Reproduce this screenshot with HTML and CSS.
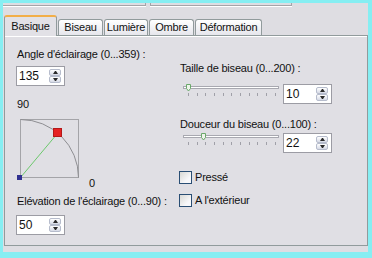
FILE: index.html
```html
<!DOCTYPE html>
<html lang="fr">
<head>
    <meta charset="UTF-8">
    <title>Biseau intérieur</title>
    <link rel="stylesheet" href="styles.css">
</head>
<body>
<div class="window">
    <div class="groups">
        <div class="grp grp-a"></div>
        <div class="grp grp-b"></div>
    </div>

    <div class="tabs">
        <div class="tab active tab-basique">Basique</div>
        <div class="tab tab-biseau">Biseau</div>
        <div class="tab tab-lumiere">Lumière</div>
        <div class="tab tab-ombre">Ombre</div>
        <div class="tab tab-deform">Déformation</div>
    </div>

    <div class="panel">
        <div class="col-left">
            <div class="label">Angle d'éclairage (0...359) :</div>
            <div class="spin spin-angle">
                <span class="val">135</span>
                <span class="btns"><span class="btn up"></span><span class="btn down"></span></span>
            </div>

            <div class="label deg90">90</div>
            <div class="diagram">
                <svg class="light" width="66" height="66" viewBox="0 0 66 66">
                    <rect x="4.5" y="3.5" width="58" height="58" fill="none" stroke="#a4a4a8"/>
                    <path d="M4.5 3.5 A58 58 0 0 1 62.5 61.5" fill="none" stroke="#8e8e92"/>
                    <line x1="4.5" y1="61.5" x2="41.8" y2="17.1" stroke="#6cc86c"/>
                    <rect x="37.5" y="12.5" width="8" height="8" fill="#e62222" stroke="#b41818"/>
                    <rect x="1" y="59" width="5" height="5" fill="#303090"/>
                </svg>
                <span class="label zero">0</span>
            </div>

            <div class="label elev">Elévation de l'éclairage (0...90) :</div>
            <div class="spin spin-elev">
                <span class="val">50</span>
                <span class="btns"><span class="btn up"></span><span class="btn down"></span></span>
            </div>
        </div>

        <div class="col-right">
            <div class="label">Taille de biseau (0...200) :</div>
            <div class="slider-row row-size">
                <svg class="slider" width="100" height="20" viewBox="0 0 100 20">
                    <rect x="3.5" y="2.5" width="95" height="2" fill="#fff" stroke="#a8a8b0"/>
                    <g stroke="#a0a0a8">
                        <line x1="8.5" y1="9" x2="8.5" y2="12"/>
                        <line x1="17.5" y1="9" x2="17.5" y2="12"/>
                        <line x1="25.5" y1="9" x2="25.5" y2="12"/>
                        <line x1="34.5" y1="9" x2="34.5" y2="12"/>
                        <line x1="43.5" y1="9" x2="43.5" y2="12"/>
                        <line x1="51.5" y1="9" x2="51.5" y2="12"/>
                        <line x1="60.5" y1="9" x2="60.5" y2="12"/>
                        <line x1="69.5" y1="9" x2="69.5" y2="12"/>
                        <line x1="77.5" y1="9" x2="77.5" y2="12"/>
                        <line x1="86.5" y1="9" x2="86.5" y2="12"/>
                        <line x1="95.5" y1="9" x2="95.5" y2="12"/>
                    </g>
                    <path d="M6.5 0.5 h4 v4 l-2 2.5 l-2 -2.5 z" fill="#eef4ea" stroke="#6aa86a"/>
                </svg>
                <div class="spin">
                    <span class="val">10</span>
                    <span class="btns"><span class="btn up"></span><span class="btn down"></span></span>
                </div>
            </div>

            <div class="label soft">Douceur du biseau (0...100) :</div>
            <div class="slider-row row-soft">
                <svg class="slider" width="100" height="20" viewBox="0 0 100 20">
                    <rect x="3.5" y="2.5" width="95" height="2" fill="#fff" stroke="#a8a8b0"/>
                    <g stroke="#a0a0a8">
                        <line x1="8.5" y1="9" x2="8.5" y2="12"/>
                        <line x1="17.5" y1="9" x2="17.5" y2="12"/>
                        <line x1="25.5" y1="9" x2="25.5" y2="12"/>
                        <line x1="34.5" y1="9" x2="34.5" y2="12"/>
                        <line x1="43.5" y1="9" x2="43.5" y2="12"/>
                        <line x1="51.5" y1="9" x2="51.5" y2="12"/>
                        <line x1="60.5" y1="9" x2="60.5" y2="12"/>
                        <line x1="69.5" y1="9" x2="69.5" y2="12"/>
                        <line x1="77.5" y1="9" x2="77.5" y2="12"/>
                        <line x1="86.5" y1="9" x2="86.5" y2="12"/>
                        <line x1="95.5" y1="9" x2="95.5" y2="12"/>
                    </g>
                    <path d="M21.5 0.5 h4 v4 l-2 2.5 l-2 -2.5 z" fill="#eef4ea" stroke="#6aa86a"/>
                </svg>
                <div class="spin">
                    <span class="val">22</span>
                    <span class="btns"><span class="btn up"></span><span class="btn down"></span></span>
                </div>
            </div>

            <div class="check check-pressed"><span class="box"></span><span class="label">Pressé</span></div>
            <div class="check check-outside"><span class="box"></span><span class="label">A l'extérieur</span></div>
        </div>
    </div>
</div>
</body>
</html>
```

FILE: styles.css
```css
body {
    margin: 0;
    height: 258px;
    overflow: hidden;
    background: #86eef2;
    font-family: "Liberation Sans", Arial, sans-serif;
    font-size: 11px;
    color: #111;
}
.window {
    width: 365px;
    height: 249px;
    margin: 3px 0 0 3px;
    background: #dedde2;
    display: flex;
    flex-direction: column;
}
.groups {
    display: flex;
    height: 3px;
}
.grp {
    height: 3px;
    box-sizing: border-box;
    border: 1px solid #a4a4a8;
    border-top: none;
    box-shadow: 0 1px 0 #fff;
}
.grp-a {
    width: 143px;
    border-left: none;
}
.grp-b {
    width: 142px;
    margin-left: 4px;
}
.tabs {
    display: flex;
    align-items: flex-end;
    height: 20px;
    margin-top: 9px;
    padding-left: 1px;
}
.tab {
    box-sizing: border-box;
    height: 16px;
    padding-top: 1px;
    line-height: 13px;
    letter-spacing: -0.2px;
    text-align: center;
    white-space: nowrap;
    border: 1px solid #919b9c;
    border-bottom: none;
    border-radius: 3px 3px 0 0;
    background: linear-gradient(#ffffff, #e6e6ec);
}
.tab.active {
    position: relative;
    z-index: 1;
    height: 21px;
    margin-bottom: -1px;
    padding-top: 3px;
    border-top: 2px solid #f2ae48;
    background: #e2e1e6;
}
.tab-basique { width: 53px; }
.tab-biseau { width: 45px; margin-left: 1px; }
.tab-lumiere { width: 44px; margin-left: 1px; }
.tab-ombre { width: 45px; margin-left: 1px; }
.tab-deform { width: 67px; margin-left: 1px; }
.panel {
    box-sizing: border-box;
    height: 211px;
    margin-left: 1px;
    padding-left: 11px;
    display: flex;
    background: #e0dfe4;
    border: 1px solid #919b9c;
    box-shadow: inset 0 1px 0 #fff;
}
.label {
    line-height: 13px;
    letter-spacing: -0.2px;
    white-space: nowrap;
}
.col-left {
    width: 163px;
    padding-top: 12px;
    display: flex;
    flex-direction: column;
    align-items: flex-start;
}
.col-left > .label {
    padding-left: 1px;
}
.spin {
    box-sizing: border-box;
    width: 49px;
    height: 20px;
    padding: 0 3px 0 2px;
    display: flex;
    align-items: center;
    background: #fff;
    border: 1px solid #9c9ca4;
}
.spin .val {
    flex: 1;
    font-size: 12px;
    line-height: 13px;
}
.btns {
    display: flex;
    flex-direction: column;
    width: 12px;
}
.btn {
    box-sizing: border-box;
    height: 7px;
    display: flex;
    align-items: center;
    justify-content: center;
    border: 1px solid #b6bccc;
    border-radius: 2px;
    background: linear-gradient(#ffffff, #d6dae6);
}
.btn::after {
    content: "";
    width: 1px;
    height: 0;
    border-left: 2px solid transparent;
    border-right: 2px solid transparent;
}
.btn.up::after {
    border-bottom: 3px solid #2a2a2a;
}
.btn.down::after {
    border-top: 3px solid #2a2a2a;
}
.spin-angle {
    margin-top: 5px;
}
.deg90 {
    margin-top: 12px;
}
.diagram {
    height: 74px;
    margin-top: 5px;
    display: flex;
    align-items: flex-end;
}
.light {
    align-self: flex-start;
    overflow: visible;
}
.col-left .zero {
    margin-left: 7px;
    padding-left: 0;
}
.elev {
    margin-top: 5px;
}
.spin-elev {
    margin-top: 7px;
}
.col-right {
    flex: 1;
    padding-top: 26px;
    display: flex;
    flex-direction: column;
}
.col-right > .label {
    padding-left: 1px;
}
.slider-row {
    display: flex;
    height: 20px;
}
.slider {
    margin-left: 1px;
    margin-right: 3px;
}
.row-size {
    margin-top: 9px;
}
.soft {
    margin-top: 14px;
}
.row-soft {
    margin-top: 2px;
}
.check {
    display: flex;
    align-items: center;
    gap: 3px;
    height: 13px;
}
.box {
    box-sizing: border-box;
    width: 13px;
    height: 13px;
    border: 1px solid #2a4e74;
    background: linear-gradient(135deg, #d8d8d4, #f8f8fa 70%);
}
.check-pressed {
    margin-top: 18px;
}
.check-outside {
    margin-top: 10px;
}
```
